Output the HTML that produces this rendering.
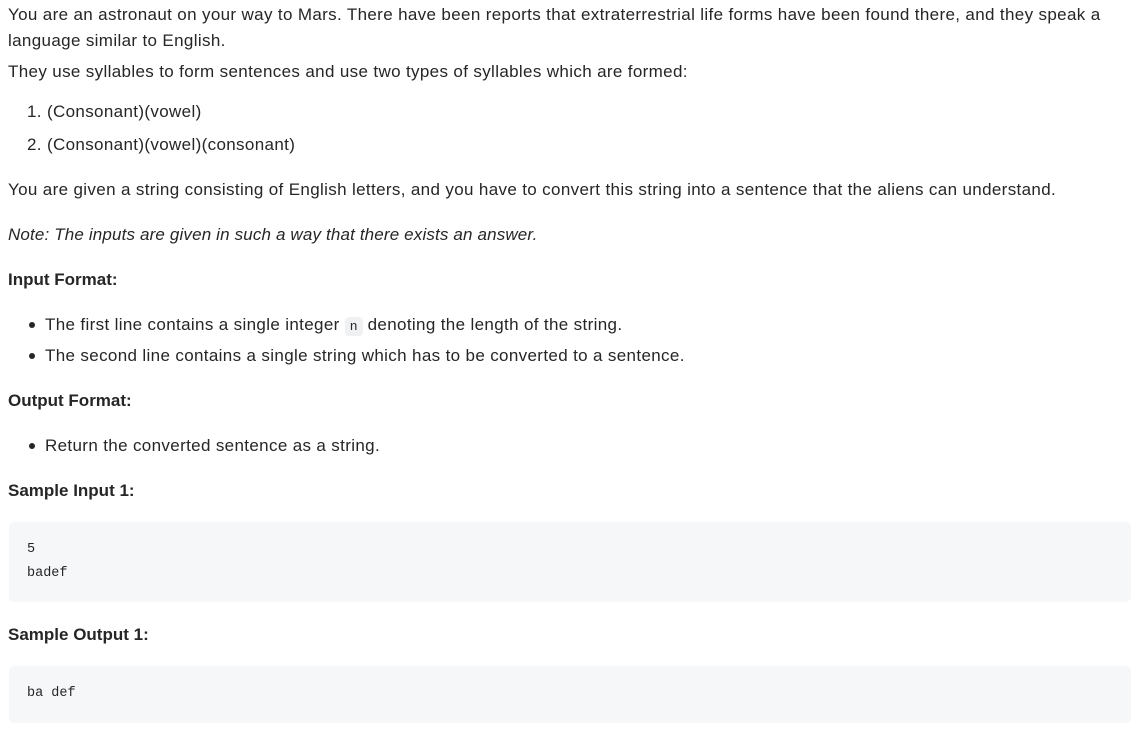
<!DOCTYPE html>
<html><head><meta charset="utf-8"><style>
body{margin:0;background:#fff;width:1131px;height:730px;overflow:hidden;position:relative;font-family:"Liberation Sans",sans-serif;color:#262626;font-size:17px;letter-spacing:0.35px}
.l{position:absolute;left:8px;line-height:22px;white-space:nowrap}
.b{font-weight:bold;letter-spacing:0}
.dot{position:absolute;left:29px;width:6px;height:6px;border-radius:50%;background:#262626}
code{font-family:"Liberation Mono",monospace;font-size:13px;letter-spacing:0;background:#f0f1f3;border-radius:4px;padding:2px 5px}
.pre{position:absolute;left:9px;width:1122px;background:#f6f7f9;border-radius:5px}
.m{position:absolute;left:27px;font-family:"Liberation Mono",monospace;font-size:13.5px;letter-spacing:0;line-height:18px;color:#262626}
</style></head><body>
<div class="l" style="top:4px">You are an astronaut on your way to Mars. There have been reports that extraterrestrial life forms have been found there, and they speak a</div>
<div class="l" style="top:30px">language similar to English.</div>
<div class="l" style="top:61px">They use syllables to form sentences and use two types of syllables which are formed:</div>
<div class="l" style="top:101px;left:27px">1. (Consonant)(vowel)</div>
<div class="l" style="top:134px;left:27px">2. (Consonant)(vowel)(consonant)</div>
<div class="l" style="top:179px">You are given a string consisting of English letters, and you have to convert this string into a sentence that the aliens can understand.</div>
<div class="l" style="top:224px;font-style:italic;letter-spacing:0.15px">Note: The inputs are given in such a way that there exists an answer.</div>
<div class="l b" style="top:269px">Input Format:</div>
<div class="dot" style="top:322px"></div>
<div class="l" style="top:314px;left:45px">The first line contains a single integer <code>n</code> denoting the length of the string.</div>
<div class="dot" style="top:353px"></div>
<div class="l" style="top:345px;left:45px">The second line contains a single string which has to be converted to a sentence.</div>
<div class="l b" style="top:390px">Output Format:</div>
<div class="dot" style="top:443px"></div>
<div class="l" style="top:435px;left:45px">Return the converted sentence as a string.</div>
<div class="l b" style="top:480px">Sample Input 1:</div>
<div class="pre" style="top:522px;height:80px"></div>
<div class="m" style="top:541px">5</div>
<div class="m" style="top:565px">badef</div>
<div class="l b" style="top:624px">Sample Output 1:</div>
<div class="pre" style="top:666px;height:57px"></div>
<div class="m" style="top:685px">ba def</div>
</body></html>
